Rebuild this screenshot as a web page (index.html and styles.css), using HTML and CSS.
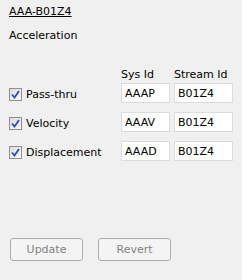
FILE: index.html
```html
<!DOCTYPE html>
<html lang="en">
<head>
  <meta charset="UTF-8">
  <title>AAA-B01Z4</title>
  <link rel="stylesheet" href="styles.css">
</head>
<body>
<div class="panel">
  <a class="title" href="#">AAA-B01Z4</a>
  <p class="kind">Acceleration</p>

  <div class="grid">
    <span></span>
    <span class="head">Sys Id</span>
    <span class="head">Stream Id</span>

    <label class="check"><span class="box"><svg width="9" height="9" viewBox="0 0 9 9"><path d="M1 4.5 L3.5 7.5 L8 1" fill="none" stroke="#2a4bb8" stroke-width="1.8"/></svg></span>Pass-thru</label>
    <input class="field" type="text" value="AAAP">
    <input class="field" type="text" value="B01Z4">

    <label class="check"><span class="box"><svg width="9" height="9" viewBox="0 0 9 9"><path d="M1 4.5 L3.5 7.5 L8 1" fill="none" stroke="#2a4bb8" stroke-width="1.8"/></svg></span>Velocity</label>
    <input class="field" type="text" value="AAAV">
    <input class="field" type="text" value="B01Z4">

    <label class="check"><span class="box"><svg width="9" height="9" viewBox="0 0 9 9"><path d="M1 4.5 L3.5 7.5 L8 1" fill="none" stroke="#2a4bb8" stroke-width="1.8"/></svg></span>Displacement</label>
    <input class="field" type="text" value="AAAD">
    <input class="field" type="text" value="B01Z4">
  </div>

  <div class="buttons">
    <button disabled>Update</button>
    <button disabled>Revert</button>
  </div>
</div>
</body>
</html>
```

FILE: styles.css
```css
body {
  margin: 0;
  background: #f0f0f0;
  font-family: "DejaVu Sans", Verdana, sans-serif;
  font-size: 11px;
  color: #000;
}
.panel {
  padding: 5px 9px;
  height: 270px;
  display: flex;
  flex-direction: column;
}
.title {
  color: #000;
  line-height: 13px;
  align-self: flex-start;
}
.kind {
  margin: 11px 0 0;
  line-height: 13px;
}
.grid {
  margin-top: 27px;
  display: grid;
  grid-template-columns: 108px 49px 59px;
  column-gap: 4px;
  row-gap: 9px;
  align-items: center;
}
.head {
  line-height: 12px;
  margin-bottom: -7px;
}
.check {
  display: flex;
  align-items: center;
  gap: 4px;
  padding-top: 2px;
}
.box {
  width: 11px;
  height: 11px;
  border: 1px solid #8f8f8f;
  background: linear-gradient(135deg, #dcdcdc, #fbfbfb);
  display: flex;
  align-items: center;
  justify-content: center;
}
.field {
  box-sizing: border-box;
  height: 20px;
  width: 100%;
  margin: 0;
  padding: 0 3px;
  border: 1px solid #dcdcdc;
  background: #fff;
  font: inherit;
  color: #000;
}
.buttons {
  margin-top: auto;
  margin-bottom: 14px;
  display: flex;
  gap: 15px;
  padding-left: 1px;
}
button {
  width: 73px;
  height: 23px;
  background: #f4f4f4;
  border: 1px solid #adadad;
  border-radius: 3px;
  font: inherit;
  color: #838383;
}
```
